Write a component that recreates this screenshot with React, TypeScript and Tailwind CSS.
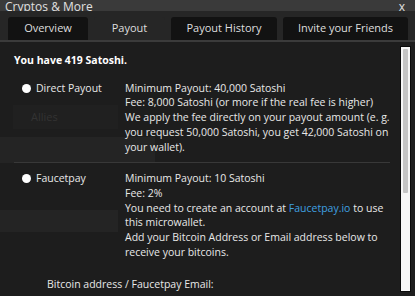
import React from 'react'

const tabs = [
    { name: "Overview", w: "w-[80px]", active: false },
    { name: "Payout", w: "w-[71px]", active: true },
    { name: "Payout History", w: "w-[106px]", active: false },
    { name: "Invite your Friends", w: "w-[125px]", active: false },
]

const Radio = () => (
    <span className='inline-block w-[9px] h-[9px] rounded-full bg-white shrink-0 mt-[3px]' />
)

const App: React.FC = () => {
    return (
        <div className='relative w-[415px] h-[296px] overflow-hidden bg-[#1d1d1d] text-[#e8e8e8]' style={{ fontFamily: "'Open Sans', 'Liberation Sans', sans-serif" }}>
            {/* game page showing through the dialog */}
            <div className='absolute inset-0 pointer-events-none text-[#333] text-[11px]'>
                <div className='absolute left-[13px] top-[105px] w-[105px] h-[24px] bg-[#202020] flex items-center pl-[18px]'>
                    <span>Allies</span>
                </div>
                <div className='absolute left-0 top-[137px] w-[155px] h-[26px] bg-[#242424]' />
                <div className='absolute left-0 top-[210px] w-[118px] h-[22px] bg-[#242424]' />
            </div>

            <div className='relative flex flex-col h-full'>
                {/* title */}
                <div className='h-[11px] bg-[#3a3a3a] flex justify-between items-end px-[5px] overflow-hidden'>
                    <span className='text-[12px] leading-[12px] text-[#e0e0e0] -mb-[2px]'>Cryptos &amp; More</span>
                    <span className='text-[12px] leading-[12px] text-[#e0e0e0] mr-[5px] -mb-[2px]'>x</span>
                </div>

                {/* tabs */}
                <div className='bg-[#262626] pt-[6px] pl-[8px] flex gap-[6px] border-b-2 border-[#3b3b3b]'>
                    {tabs.map((tab) => (
                        <div key={tab.name} className={`${tab.w} h-[23px] rounded-t-[3px] flex items-center justify-center text-[11px] text-[#dedede] ${tab.active ? 'bg-[#262626]' : 'bg-[#121212]'}`}>
                            {tab.name}
                        </div>
                    ))}
                </div>

                {/* content */}
                <div className='flex flex-1 min-h-0'>
                    <div className='flex-1 pl-[14px] pr-[10px] text-[10.5px] leading-[14.7px]'>
                        <div className='font-bold text-[10.5px] text-white pt-[11px]'>You have 419 Satoshi.</div>

                        <div className='flex mt-[13px] pb-[8px] border-b border-[#383838]'>
                            <div className='w-[111px] flex gap-[5px] pl-[8px]'>
                                <Radio />
                                <span>Direct Payout</span>
                            </div>
                            <div className='flex-1'>
                                Minimum Payout: 40,000 Satoshi<br />
                                Fee: 8,000 Satoshi (or more if the real fee is higher)<br />
                                We apply the fee directly on your payout amount (e. g.<br />
                                you request 50,000 Satoshi, you get 42,000 Satoshi on<br />
                                your wallet).
                            </div>
                        </div>

                        <div className='flex pt-[8px]'>
                            <div className='w-[111px] flex gap-[5px] pl-[8px]'>
                                <Radio />
                                <span>Faucetpay</span>
                            </div>
                            <div className='flex-1'>
                                Minimum Payout: 10 Satoshi<br />
                                Fee: 2%<br />
                                You need to create an account at <span className='text-[#3fa0e0]'>Faucetpay.io</span> to use<br />
                                this microwallet.<br />
                                Add your Bitcoin Address or Email address below to<br />
                                receive your bitcoins.
                            </div>
                        </div>

                        <div className='pl-[33px] mt-[18px]'>Bitcoin address / Faucetpay Email:</div>
                    </div>

                    {/* scrollbar */}
                    <div className='w-[15px] pt-[4px] pb-[4px] pr-[4px]'>
                        <div className='h-full w-[11px] bg-[#f6f6f6] border border-[#0a0a0a] p-[2px]'>
                            <div className='h-[144px] bg-[#c4c4c4] rounded-[1px]' />
                        </div>
                    </div>
                </div>
            </div>
        </div>
    )
}

export default App
